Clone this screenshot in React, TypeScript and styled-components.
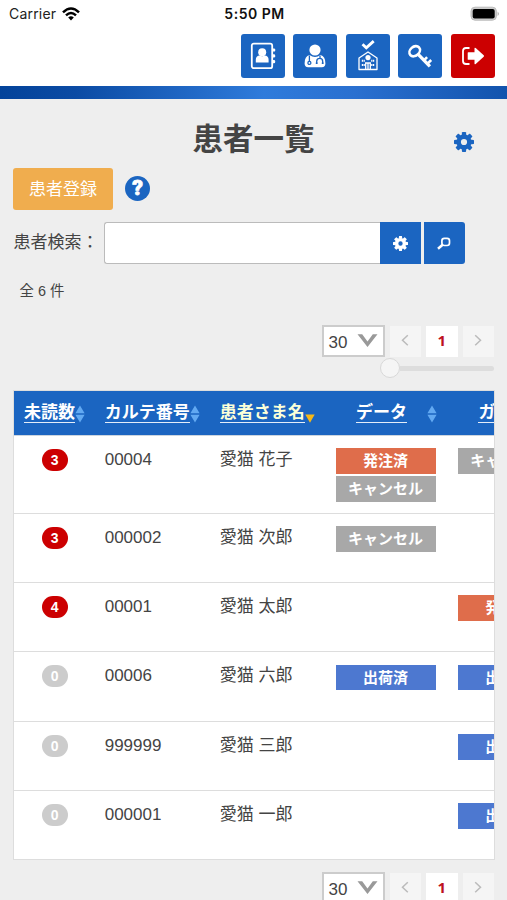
import React from "react";
import styled, { createGlobalStyle, css } from "styled-components";

const BLUE = "#1b65c1";
const latin = `"Liberation Sans", "Noto Sans CJK JP", sans-serif`;
const ui = `Inter, "Noto Sans CJK JP", sans-serif`;

const GlobalStyle = createGlobalStyle`
  * { box-sizing: border-box; }
  html, body { margin: 0; height: 100%; overflow: hidden; background: #eee; }
  body { font-family: ${latin}; color: #444; font-size: 17px; }
  button, input { font: inherit; margin: 0; padding: 0; border: 0; }
  svg { display: block; }
`;

const Page = styled.div`
  width: 507px;
  height: 900px;
  overflow: hidden;
  background: #eee;
`;

const StatusBar = styled.div`
  height: 28px;
  padding: 0 7px 0 9px;
  display: grid;
  grid-template-columns: 1fr auto 1fr;
  align-items: center;
  background: #fff;
  color: #222;
  line-height: 28px;
  font-family: ${ui};
`;

const Carrier = styled.div`
  display: flex;
  align-items: center;
  gap: 6px;
  font-weight: 400;
  font-size: 14px;
  letter-spacing: 0.2px;
`;

const Clock = styled.time`
  font-weight: 600;
  font-size: 14px;
  letter-spacing: 0.5px;
  color: #111;
`;

const Battery = styled.div`
  justify-self: end;
`;

const Nav = styled.nav`
  height: 58px;
  padding: 6px 12.5px 0;
  display: flex;
  justify-content: flex-end;
  gap: 8.5px;
  background: #fff;
`;

const NavButton = styled.button<{ $danger?: boolean }>`
  width: 44px;
  height: 44px;
  display: flex;
  align-items: center;
  justify-content: center;
  border-radius: 3px;
  background: ${(p) => (p.$danger ? "#cc0001" : BLUE)};
  color: #fff;
`;

const Stripe = styled.div`
  height: 12.5px;
  background: linear-gradient(90deg, #03439a 0, #0b4ba4 15%, #2f7bdb 52%, #2a70d0 70%, #1253ad 100%);
`;

const Main = styled.main`
  padding: 0 13px 0 13px;
`;

const TitleRow = styled.div`
  height: 69.5px;
  padding: 17px 20px 0 0;
  display: grid;
  grid-template-columns: 20px 1fr 20px;
  align-items: start;
`;

const Title = styled.h1`
  grid-column: 2;
  margin: 0;
  padding-left: 20px;
  text-align: center;
  font-weight: 700;
  font-size: 30.5px;
  line-height: 46px;
`;

const TitleGear = styled.div`
  padding-top: 16px;
  color: ${BLUE};
`;

const ActionRow = styled.div`
  display: flex;
  gap: 12px;
`;

const RegisterButton = styled.button`
  width: 100px;
  height: 42px;
  border-radius: 3px;
  background: #f0ad4e;
  color: #fff;
  line-height: 44px;
`;

const Help = styled.div`
  width: 25px;
  height: 25px;
  margin-top: 7.5px;
  display: flex;
  align-items: center;
  justify-content: center;
  border-radius: 50%;
  background: ${BLUE};
  color: #fff;
  font: 900 21px/25px Roboto, sans-serif;
  -webkit-text-stroke: 0.8px #fff;
`;

const SearchRow = styled.div`
  margin-top: 12px;
  height: 42px;
  display: flex;
`;

const SearchLabel = styled.label`
  width: 91px;
  padding-left: 0.5px;
  line-height: 41px;
  white-space: nowrap;
`;

const SearchInput = styled.input`
  width: 275.5px;
  height: 42px;
  border: 1px solid #bbb;
  border-right: 0;
  border-radius: 3px 0 0 3px;
  background: #fff;
`;

const SearchButton = styled.button<{ $last?: boolean }>`
  width: 41px;
  height: 42px;
  margin-right: 3px;
  display: flex;
  align-items: center;
  justify-content: center;
  border-radius: ${(p) => (p.$last ? "0 3px 3px 0" : "0")};
  background: ${BLUE};
  color: #fff;
`;

const Count = styled.p`
  margin: 16px 0 0 6.5px;
  font-size: 14.4px;
  line-height: 22px;
`;

const PagerRow = styled.div`
  display: flex;
  justify-content: flex-end;
  align-items: center;
  height: 32px;
`;

const PageSize = styled.div`
  width: 63px;
  height: 32px;
  margin-right: 5px;
  padding: 0 5px;
  display: flex;
  align-items: center;
  justify-content: space-between;
  border: 2px solid #ccc;
  background: #fff;
`;

const PageNumber = styled.span`
  padding-top: 3px;
  line-height: 28px;
`;

const PageButton = styled.button<{ $current?: boolean }>`
  width: 31.5px;
  height: 31px;
  padding-bottom: 2px;
  display: flex;
  align-items: center;
  justify-content: center;
  background: ${(p) => (p.$current ? "#fff" : "#f5f5f5")};
  color: ${(p) => (p.$current ? "#bd1020" : "#bbb")};
  font: 700 15px/29px "Open Sans", sans-serif;
  & + & { margin-left: 5px; }
`;

const TopPager = styled.div`
  margin-top: 23px;
`;

const Slider = styled.div`
  height: 20px;
  margin: 1px 0 12px auto;
  width: 114px;
  display: flex;
  align-items: center;
`;

const Knob = styled.div`
  width: 20px;
  height: 20px;
  flex: none;
  border: 1px solid #d8d8d8;
  border-radius: 50%;
  background: #f5f5f5;
`;

const Track = styled.div`
  flex: 1;
  height: 5px;
  border-radius: 0 3px 3px 0;
  background: #ddd;
`;

const TableFrame = styled.section`
  width: 481.5px;
  height: 470px;
  margin-bottom: 12px;
  overflow: hidden;
  border: 1px solid #ddd;
  background: #fff;
`;

const columns = css`
  display: grid;
  grid-template-columns: 80.7px 115px 115.3px 122.4px 122.4px;
  width: 556px;
`;

const HeaderRow = styled.div`
  ${columns}
  height: 45px;
  background: ${BLUE};
  border-bottom: 1px solid #ccd5df;
`;

const HeaderCell = styled.div<{ $wide?: boolean }>`
  display: flex;
  align-items: center;
  padding: 1px 0 0 ${(p) => (p.$wide ? 31 : 10)}px;
  gap: ${(p) => (p.$wide ? 20 : 0)}px;
  white-space: nowrap;
`;

const HeaderLink = styled.a<{ $active?: boolean }>`
  color: ${(p) => (p.$active ? "#fbffd8" : "#fff")};
  font-weight: 700;
  font-size: 17px;
  line-height: 18px;
  border-bottom: 1px solid #e4edf9;
`;

const Row = styled.div<{ $tall?: boolean }>`
  ${columns}
  height: ${(p) => (p.$tall ? 78 : 69.2)}px;
  border-bottom: 1.5px solid #ddd;
`;

const Cell = styled.div<{ $center?: boolean }>`
  padding: ${(p) => (p.$center ? "13px 0 0 28px" : "11px 0 0 10px")};
  line-height: 26px;
  white-space: nowrap;
`;

const Unread = styled.span<{ $empty: boolean }>`
  display: block;
  width: 25.5px;
  height: 22px;
  border-radius: 11px;
  background: ${(p) => (p.$empty ? "#ccc" : "#cc0001")};
  color: #fff;
  text-align: center;
  font-weight: 700;
  font-size: 14px;
  line-height: 22px;
`;

const Statuses = styled.div`
  padding: 12.2px 0 0 11px;
  display: flex;
  flex-direction: column;
  gap: 2.4px;
`;

type Kind = "ordered" | "cancel" | "shipped";
const kindColor: Record<Kind, string> = { ordered: "#df6d4b", cancel: "#a8a8a8", shipped: "#4d78d0" };
const kindLabel: Record<Kind, string> = { ordered: "発注済", cancel: "キャンセル", shipped: "出荷済" };

const Status = styled.span<{ $kind: Kind }>`
  width: 100px;
  height: 25.8px;
  background: ${(p) => kindColor[p.$kind]};
  color: #fff;
  text-align: center;
  font-weight: 700;
  font-size: 15px;
  line-height: 25.8px;
  text-indent: -1px;
`;

const teeth = [0, 45, 90, 135, 180, 225, 270, 315];
const Gear = ({ size, hole = 3.1 }: { size: number; hole?: number }) => (
  <svg width={size} height={size} viewBox="0 0 20 20" fill="currentColor">
    <path
      fillRule="evenodd"
      d={`M10 2.6a7.4 7.4 0 1 0 0 14.8a7.4 7.4 0 1 0 0-14.8zM10 ${10 - hole}a${hole} ${hole} 0 1 1 0 ${hole * 2}a${hole} ${hole} 0 1 1 0-${hole * 2}z`}
    />
    {teeth.map((a) => (
      <path key={a} d="M7.6 3.8L8 .4Q8.1 0 8.5 0h3q.4 0 .5.4l.4 3.4z" transform={`rotate(${a} 10 10)`} />
    ))}
  </svg>
);

const Wifi = () => (
  <svg width="18" height="14" viewBox="0 0 18 14" fill="none" stroke="#000" strokeWidth="2.5">
    <path d="M1 5.3Q9-2.4 17 5.3" />
    <path d="M4 8.4Q9 3.7 14 8.4" />
    <path d="M6.2 10.5Q9 8 11.8 10.5L9 13.5z" fill="#000" stroke="none" />
  </svg>
);

const BatteryIcon = () => (
  <svg width="30" height="16" viewBox="0 0 30 16">
    <rect x="1" y="1.2" width="25.4" height="13" rx="4" fill="#ccc" stroke="#bbb" />
    <rect x="2.7" y="3" width="22" height="9.6" rx="2" fill="#000" />
    <path d="M27.6 5.4q2.6 2.3 0 4.6z" fill="#aaa" />
  </svg>
);

const AddressBook = () => (
  <svg width="26" height="28" viewBox="0 0 26 28" fill="none" stroke="#fff">
    <rect x="1.8" y="1.6" width="20.4" height="24.6" rx="2" strokeWidth="1.8" />
    <g fill="#fff" stroke="none">
      <circle cx="12.2" cy="10.2" r="4" />
      <path d="M5.8 20.5v-2.8q0-4 4-4.2q2.4 1.5 4.8 0q4 .2 4 4.2v2.8z" />
      <rect x="22" y="6.4" width="3.2" height="3.2" rx="1.2" />
      <rect x="22" y="12.2" width="3.2" height="3.2" rx="1.2" />
      <rect x="22" y="18" width="3.2" height="3.2" rx="1.2" />
    </g>
  </svg>
);

const Doctor = () => (
  <svg width="22" height="24" viewBox="0 0 22 24">
    <circle cx="11" cy="6" r="5.6" fill="#fff" />
    <path d="M5.5 11Q11 15 16.5 11Q21.4 12 21.4 19.5Q21.4 23.2 17.8 23.2H4.2Q.6 23.2.6 19.5Q.6 12 5.5 11z" fill="#fff" />
    <g fill="none" stroke={BLUE} strokeWidth="1.3">
      <path d="M5.4 11.5v6M16 11.6v2.6M12.7 19v-1.6q0-3 3-3t3 3V19" />
      <circle cx="5.4" cy="18.9" r="1.5" />
      <path d="M12.7 18.5v1.5M18.7 18.5v1.5" strokeWidth="1.8" />
    </g>
  </svg>
);

const Clinic = () => (
  <svg width="22" height="32" viewBox="0 0 22 32" fill="none" stroke="#fff">
    <path d="M5.5 4.3l3.8 3.5L16.7 1.1" strokeWidth="2.8" />
    <path d="M2 29.5V18l9-6 9 6v11.5z" strokeWidth="1.3" strokeLinejoin="round" />
    <path d="M4.8 20.8h3M4.8 25h3M14.2 20.8h3M14.2 25h3" strokeWidth="2" strokeDasharray="1.3 .5" />
    <circle cx="11" cy="17.6" r="2.6" fill="#fff" stroke="none" />
    <path d="M8.7 29.5v-6.5h4.6v6.5M11 23v6.5" strokeWidth="1.3" />
  </svg>
);

const KeyIcon = () => (
  <svg width="26" height="26" viewBox="0 0 26 26" fill="none" stroke="#fff" strokeWidth="2.6">
    <ellipse cx="7.7" cy="8.2" rx="5.8" ry="4.5" transform="rotate(-42 7.7 8.2)" />
    <path d="M11 11.2L22.9 23.4" strokeWidth="3.3" />
    <path d="M16.5 17.8l3.6-3.6M20 21.2l4.2-4.2" strokeWidth="2.6" />
  </svg>
);

const SignOut = () => (
  <svg width="24" height="20" viewBox="0 0 24 20">
    <path d="M8.5 2H5Q2 2 2 5v10q0 3 3 3h3.5" fill="none" stroke="#fff" strokeWidth="1.8" />
    <path d="M7.3 6.2h6.2V2.5q0-1.4 1.2-.4l8 7.1q.7.8 0 1.6l-8 7.1q-1.2 1-1.2-.4v-3.7H7.3q-.6 0-.6-.6V6.8q0-.6.6-.6z" fill="#fff" />
  </svg>
);

const Magnifier = () => (
  <svg width="14" height="13" viewBox="0 0 14 13" fill="none" stroke="#fff">
    <rect x="4.9" y="1.3" width="7.6" height="7.2" rx="2.4" strokeWidth="1.7" />
    <path d="M5.6 7.8L1 11.8" strokeWidth="2.5" />
  </svg>
);

const Sort = () => (
  <svg width="10" height="18" viewBox="0 0 10 18" fill="#62a9f2">
    <path d="M.4 8.3L5 .4l4.6 7.9zM.4 9.7h9.2L5 17.6z" />
  </svg>
);

const SortActive = () => (
  <svg width="10" height="18" viewBox="0 0 10 18" fill="#f5b718">
    <path d="M.3 9.5h9.4L5 17.8z" />
  </svg>
);

const Chevron = ({ right }: { right?: boolean }) => (
  <svg width="8" height="13" viewBox="0 0 8 13" fill="none" stroke="currentColor" strokeWidth="1.5">
    <path d={right ? "M1.2 1.3l5.3 5-5.3 5" : "M6.8 1.3l-5.3 5 5.3 5"} />
  </svg>
);

const Pager = () => (
  <PagerRow>
    <PageSize>
      <PageNumber>30</PageNumber>
      <svg width="21" height="14" viewBox="0 0 21 14">
        <path d="M.5.3h4.7l5.3 7.3L15.8.3h4.7l-10 12.8z" fill="#999" />
      </svg>
    </PageSize>
    <PageButton aria-label="前へ"><Chevron /></PageButton>
    <PageButton $current>1</PageButton>
    <PageButton aria-label="次へ"><Chevron right /></PageButton>
  </PagerRow>
);

interface Patient {
  unread: number;
  chart: string;
  name: string;
  data: Kind[];
  guide: Kind[];
}

const patients: Patient[] = [
  { unread: 3, chart: "00004", name: "愛猫 花子", data: ["ordered", "cancel"], guide: ["cancel"] },
  { unread: 3, chart: "000002", name: "愛猫 次郎", data: ["cancel"], guide: [] },
  { unread: 4, chart: "00001", name: "愛猫 太郎", data: [], guide: ["ordered"] },
  { unread: 0, chart: "00006", name: "愛猫 六郎", data: ["shipped"], guide: ["shipped"] },
  { unread: 0, chart: "999999", name: "愛猫 三郎", data: [], guide: ["shipped"] },
  { unread: 0, chart: "000001", name: "愛猫 一郎", data: [], guide: ["shipped"] },
];

const StatusList = ({ kinds }: { kinds: Kind[] }) => (
  <Statuses>
    {kinds.map((k) => (
      <Status key={k} $kind={k}>{kindLabel[k]}</Status>
    ))}
  </Statuses>
);

export default function App() {
  return (
    <Page>
      <GlobalStyle />
      <StatusBar>
        <Carrier>Carrier <Wifi /></Carrier>
        <Clock>5:50 PM</Clock>
        <Battery><BatteryIcon /></Battery>
      </StatusBar>
      <Nav>
        <NavButton><AddressBook /></NavButton>
        <NavButton><Doctor /></NavButton>
        <NavButton><Clinic /></NavButton>
        <NavButton><KeyIcon /></NavButton>
        <NavButton $danger><SignOut /></NavButton>
      </Nav>
      <Stripe />
      <Main>
        <TitleRow>
          <Title>患者一覧</Title>
          <TitleGear><Gear size={20} /></TitleGear>
        </TitleRow>
        <ActionRow>
          <RegisterButton>患者登録</RegisterButton>
          <Help>?</Help>
        </ActionRow>
        <SearchRow>
          <SearchLabel htmlFor="q">患者検索：</SearchLabel>
          <SearchInput id="q" />
          <SearchButton><Gear size={15} hole={2.9} /></SearchButton>
          <SearchButton $last><Magnifier /></SearchButton>
        </SearchRow>
        <Count>全 6 件</Count>
        <TopPager><Pager /></TopPager>
        <Slider><Knob /><Track /></Slider>
        <TableFrame>
          <HeaderRow>
            <HeaderCell><HeaderLink>未読数</HeaderLink><Sort /></HeaderCell>
            <HeaderCell><HeaderLink>カルテ番号</HeaderLink><Sort /></HeaderCell>
            <HeaderCell><HeaderLink $active>患者さま名</HeaderLink><SortActive /></HeaderCell>
            <HeaderCell $wide><HeaderLink>データ</HeaderLink><Sort /></HeaderCell>
            <HeaderCell $wide><HeaderLink>ガイド</HeaderLink><Sort /></HeaderCell>
          </HeaderRow>
          {patients.map((p) => (
            <Row key={p.chart} $tall={p.data.length > 1}>
              <Cell $center><Unread $empty={p.unread === 0}>{p.unread}</Unread></Cell>
              <Cell>{p.chart}</Cell>
              <Cell>{p.name}</Cell>
              <StatusList kinds={p.data} />
              <StatusList kinds={p.guide} />
            </Row>
          ))}
        </TableFrame>
        <Pager />
      </Main>
    </Page>
  );
}
